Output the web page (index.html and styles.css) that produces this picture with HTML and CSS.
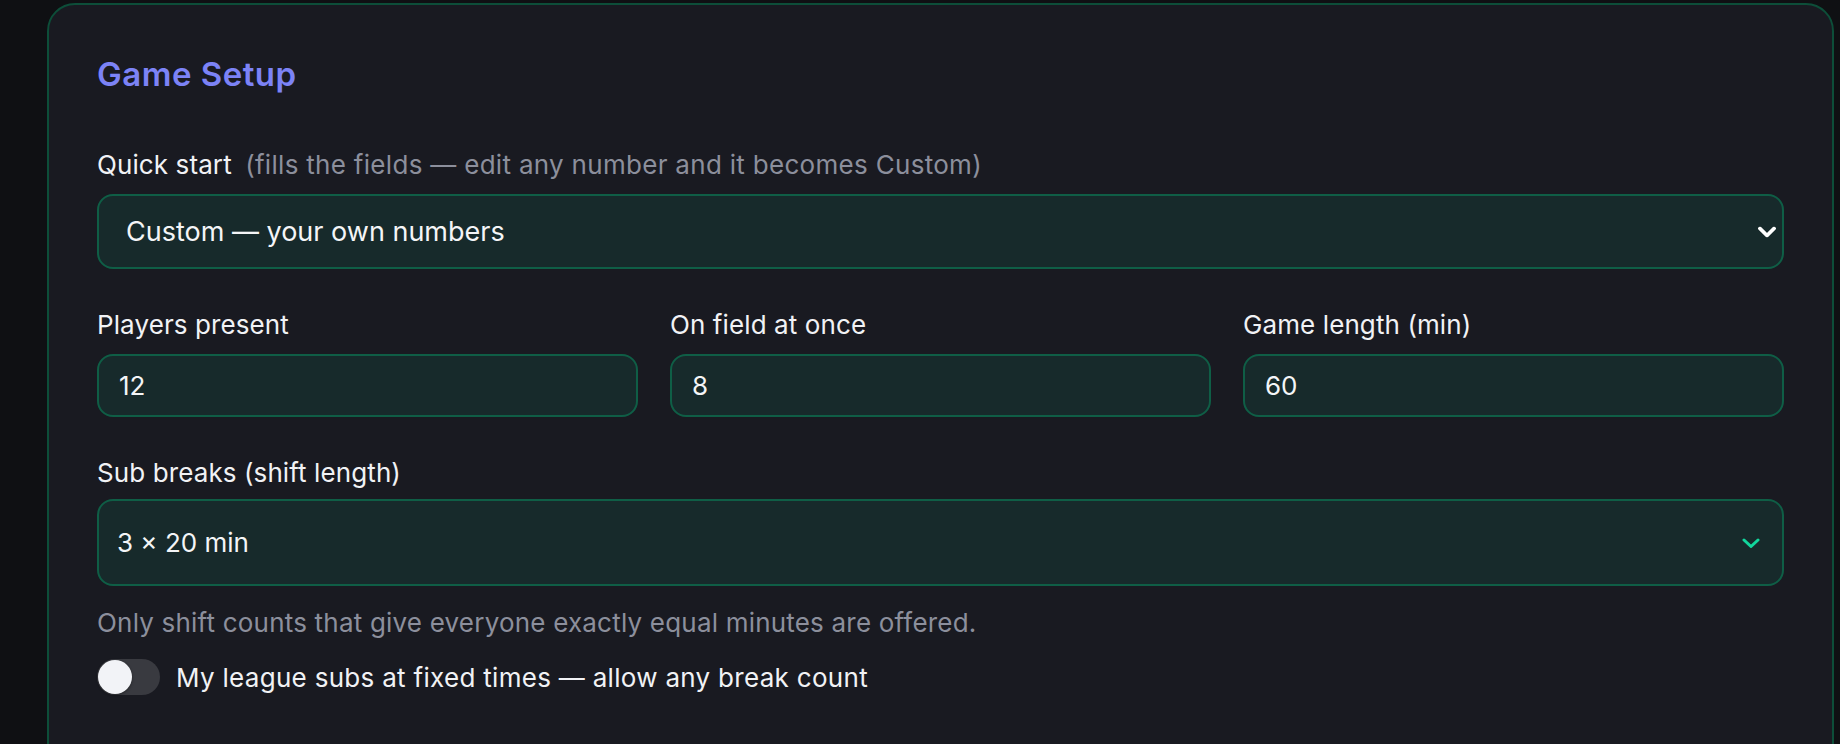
FILE: index.html
```html
<!DOCTYPE html>
<html lang="en">
<head>
<meta charset="UTF-8">
<meta name="viewport" content="width=device-width, initial-scale=1.0">
<title>Game Setup</title>
<link rel="stylesheet" href="styles.css">
</head>
<body>

<div class="page">
  <section class="card">
    <h2 class="card-title">Game Setup</h2>

    <div class="field">
      <label class="field-label" for="preset">Quick start <span class="field-note">(fills the fields — edit any number and it becomes Custom)</span></label>
      <div class="select-wrap">
        <select id="preset" class="control select-native">
          <option>Custom — your own numbers</option>
        </select>
        <svg class="chevron chevron-plain" viewBox="0 0 18 11" width="18" height="11">
          <path d="M2 2 L9 9 L16 2" fill="none" stroke="#ffffff" stroke-width="3.8" stroke-linecap="round" stroke-linejoin="round"/>
        </svg>
      </div>
    </div>

    <div class="field-row">
      <div class="field">
        <label class="field-label" for="players">Players present</label>
        <input id="players" class="control" type="number" value="12">
      </div>
      <div class="field">
        <label class="field-label" for="onfield">On field at once</label>
        <input id="onfield" class="control" type="number" value="8">
      </div>
      <div class="field">
        <label class="field-label" for="length">Game length (min)</label>
        <input id="length" class="control" type="number" value="60">
      </div>
    </div>

    <div class="field field-breaks">
      <label class="field-label" for="breaks">Sub breaks (shift length)</label>
      <div class="select-wrap">
        <select id="breaks" class="control select-custom">
          <option>3 × 20 min</option>
          <option>2 × 30 min</option>
          <option>4 × 15 min</option>
        </select>
        <svg class="chevron chevron-accent" viewBox="0 0 18 10" width="18" height="10">
          <path d="M2 2 L9 8.5 L16 2" fill="none" stroke="#12d69c" stroke-width="3" stroke-linecap="round" stroke-linejoin="round"/>
        </svg>
      </div>
      <p class="hint">Only shift counts that give everyone exactly equal minutes are offered.</p>
    </div>

    <label class="toggle-row">
      <input type="checkbox" class="toggle">
      <span>My league subs at fixed times — allow any break count</span>
    </label>
  </section>
</div>

</body>
</html>
```

FILE: styles.css
```css
body {
  margin: 0;
  background-color: #0f1013;
  color: #f1f2f5;
  font-family: 'Inter', 'Noto Sans', sans-serif;
}

.page {
  padding: 3px 6px 0 47px;
}

.card {
  background-color: #191a21;
  border: 2px solid #0d4e39;
  border-radius: 28px;
  padding: 50px 48px 80px;
}

.card-title {
  margin: 0 0 54px;
  font-size: 33px;
  font-weight: 600;
  letter-spacing: 0.5px;
  color: #7c83f6;
  line-height: 1.2;
}

.field {
  display: flex;
  flex-direction: column;
}

.field-label {
  font-size: 26px;
  line-height: 1.2;
  letter-spacing: 0.1px;
  margin-bottom: 14px;
}

.field-note {
  color: #8c8f9c;
  margin-left: 6px;
  letter-spacing: 0.3px;
}

.field-row {
  display: grid;
  grid-template-columns: repeat(3, 1fr);
  gap: 32px;
  margin-top: 40px;
}

.field-breaks {
  margin-top: 40px;
}

.field-breaks .field-label {
  margin-bottom: 11px;
}

.control {
  box-sizing: border-box;
  width: 100%;
  height: 63px;
  padding: 0 20px;
  background-color: #172a2b;
  border: 2px solid #0f5e46;
  border-radius: 16px;
  color: #f4f5f7;
  font-family: inherit;
  font-size: 26px;
  outline: none;
  appearance: none;
  -webkit-appearance: none;
}

.control::-webkit-outer-spin-button,
.control::-webkit-inner-spin-button {
  -webkit-appearance: none;
  margin: 0;
}

.select-wrap {
  position: relative;
}

.select-native {
  height: 75px;
  padding-left: 27px;
  font-size: 27px;
}

.select-custom {
  height: 87px;
  padding-left: 18px;
}

.chevron {
  position: absolute;
  top: 50%;
  transform: translateY(-50%);
  pointer-events: none;
}

.chevron-plain {
  right: 8px;
  margin-top: 1px;
}

.chevron-accent {
  right: 24px;
}

.hint {
  margin: 21px 0 0;
  font-size: 26px;
  line-height: 1.2;
  letter-spacing: 0.2px;
  color: #8c8f9c;
}

.toggle-row {
  display: flex;
  align-items: center;
  gap: 16px;
  margin-top: 21px;
  font-size: 26px;
  letter-spacing: 0.3px;
}

.toggle {
  position: relative;
  flex: none;
  width: 63px;
  height: 36px;
  margin: 0;
  border-radius: 18px;
  background-color: #393a40;
  appearance: none;
  -webkit-appearance: none;
  cursor: pointer;
}

.toggle::before {
  content: '';
  position: absolute;
  top: 1px;
  left: 1px;
  width: 34px;
  height: 34px;
  border-radius: 50%;
  background-color: #f2f3f7;
  box-shadow: 0 1px 3px rgba(0,0,0,0.4);
  transition: left 0.15s;
}

.toggle:checked {
  background-color: #10b981;
}

.toggle:checked::before {
  left: 28px;
}
```
